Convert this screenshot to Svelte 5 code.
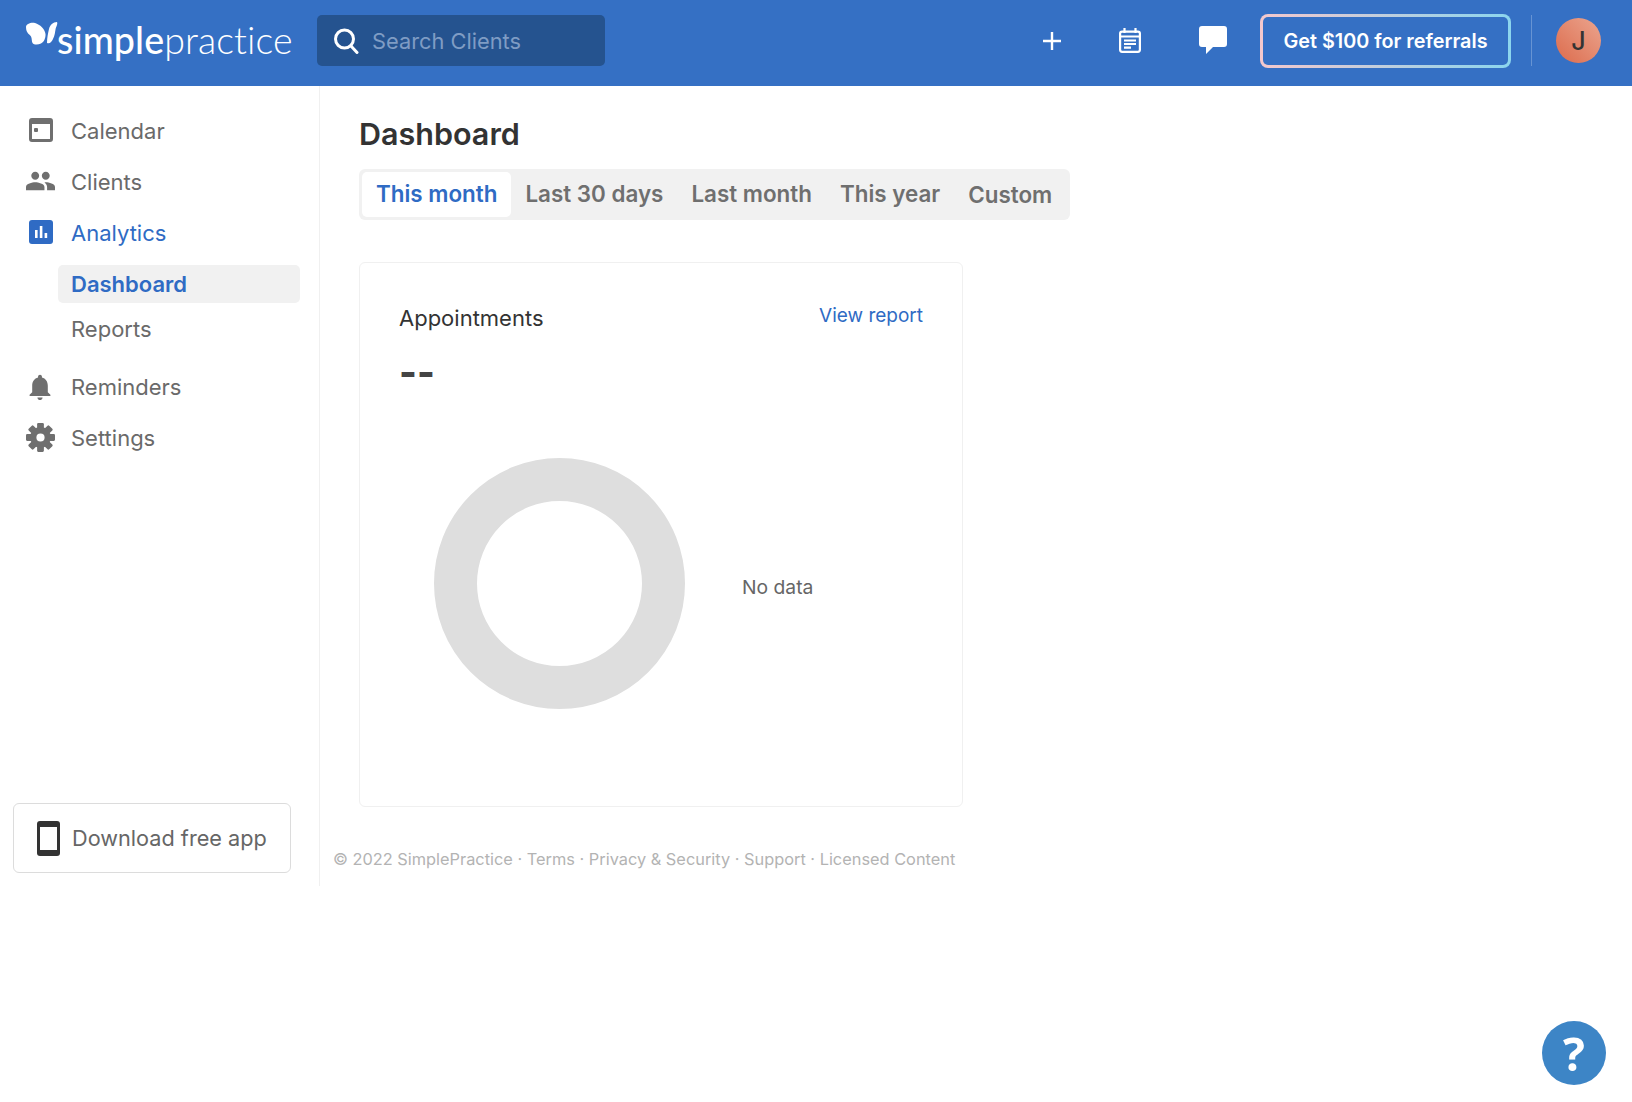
<script>
  const periods = ["This month", "Last 30 days", "Last month", "This year", "Custom"]
  const footerLinks = ["Terms", "Privacy & Security", "Support", "Licensed Content"]
  const teeth = [0, 45, 90, 135, 180, 225, 270, 315]
</script>

<header>
  <div class="logo">
    <svg class="fly" viewBox="0 0 34 26" width="34" height="26">
      <path d="M1 6C1 3 6 1 10 2c5 1.500 10 6 10.500 11 .3 4-1.500 8-4.500 9.500-3 1.500-7 1.500-8.500-.5-1-2-.5-4.500-1.500-6.500-1-2-5-3-5-9.500z" fill="#fff"/>
      <path d="M32 1c-4 0-7 3-8 7-1 4-2 9-2 14 3 1 4.500-1 6-4 2-4 2-7 2.600-10 .4-2 2.400-5 1.400-7z" fill="#fff"/>
    </svg>
    <span class="word"><b>simple</b>practice</span>
  </div>
  <div class="search">
    <svg viewBox="0 0 26 26" width="26" height="26" fill="none" stroke="#fff" stroke-width="3" stroke-linecap="round">
      <circle cx="11.5" cy="11" r="9"/>
      <path d="M18 18l6 6.5"/>
    </svg>
    <span>Search Clients</span>
  </div>
  <div class="actions">
    <svg class="plus" viewBox="0 0 18 18" width="18" height="18" stroke="#fff" stroke-width="2.4">
      <path d="M9 0v18M0 9h18"/>
    </svg>
    <svg class="cal" viewBox="0 0 22 25" width="22" height="25" fill="none" stroke="#fff" stroke-width="2.2">
      <rect x="1.1" y="3.6" width="19.8" height="20.2" rx="2"/>
      <path d="M5.5 0v5M16.5 0v5M1 8.5h20M5 12.5h12M5 16h12M5 19.7h7"/>
    </svg>
    <svg class="chat" viewBox="0 0 28 28" width="28" height="28">
      <path d="M3 0h22a3 3 0 0 1 3 3v15a3 3 0 0 1-3 3H14l-7 7v-7H3a3 3 0 0 1-3-3V3a3 3 0 0 1 3-3z" fill="#fff"/>
    </svg>
    <div class="refer">Get $100 for referrals</div>
    <div class="divider"></div>
    <div class="avatar">J</div>
  </div>
</header>

<div class="page">
  <aside>
    <nav>
      <a class="item" href="#calendar">
        <svg viewBox="0 0 24 24" width="24" height="24">
          <path fill-rule="evenodd" d="M3 0h18a3 3 0 0 1 3 3v18a3 3 0 0 1-3 3H3a3 3 0 0 1-3-3V3a3 3 0 0 1 3-3zM3 6v15h18V6z" fill="#6f6f6f"/>
          <rect x="5" y="10" width="4" height="4" rx="1" fill="#6f6f6f"/>
        </svg>
        Calendar
      </a>
      <a class="item" href="#clients">
        <svg class="wide" viewBox="1 5 22 14" width="29" height="20">
          <path d="M16 11c1.66 0 2.99-1.34 2.99-3S17.66 5 16 5c-1.66 0-3 1.34-3 3s1.34 3 3 3zm-8 0c1.66 0 2.99-1.34 2.99-3S9.66 5 8 5C6.34 5 5 6.34 5 8s1.34 3 3 3zm0 2c-2.33 0-7 1.17-7 3.5V19h14v-2.5c0-2.33-4.67-3.5-7-3.5zm8 0c-.29 0-.62.02-.97.05 1.16.84 1.97 1.97 1.97 3.45V19h6v-2.5c0-2.33-4.67-3.5-7-3.5z" fill="#6f6f6f"/>
        </svg>
        Clients
      </a>
      <a class="item blue" href="#analytics">
        <svg viewBox="0 0 24 24" width="24" height="24">
          <rect width="24" height="24" rx="3" fill="#2f6bc4"/>
          <path d="M6 10h2.6v8H6zM10.8 6h2.6v12h-2.6zM15.6 13h2.6v5h-2.6z" fill="#fff"/>
        </svg>
        Analytics
      </a>
      <div class="subs">
        <a class="sub active" href="#dashboard">Dashboard</a>
        <a class="sub" href="#reports">Reports</a>
      </div>
      <a class="item" href="#reminders">
        <svg viewBox="4 2 16 20" width="22" height="26">
          <path d="M12 22c1.1 0 2-.9 2-2h-4c0 1.1.9 2 2 2zm6-6v-5c0-3.07-1.64-5.64-4.5-6.32V4c0-.83-.67-1.5-1.5-1.5s-1.5.67-1.5 1.5v.68C7.63 5.36 6 7.92 6 11v5l-2 2v1h16v-1l-2-2z" fill="#6f6f6f"/>
        </svg>
        Reminders
      </a>
      <a class="item" href="#settings">
        <svg class="wide" viewBox="0 0 30 30" width="29" height="29">
          {#each teeth as t}
            <rect x="11.5" y="0" width="7" height="7" rx="1.2" fill="#6f6f6f" transform="rotate({t} 15 15)"/>
          {/each}
          <circle cx="15" cy="15" r="7.5" fill="none" stroke="#6f6f6f" stroke-width="6.5"/>
        </svg>
        Settings
      </a>
    </nav>
    <a class="download" href="#app">
      <svg viewBox="0 0 23 35" width="23" height="35">
        <rect width="23" height="35" rx="3" fill="#333"/>
        <rect x="3" y="6" width="17" height="23" fill="#fff"/>
      </svg>
      Download free app
    </a>
  </aside>

  <main>
    <h1>Dashboard</h1>
    <div class="tabs">
      {#each periods as p, i}
        <button class:on={i == 0}>{p}</button>
      {/each}
    </div>

    <section class="card">
      <div class="card-top">
        <span class="card-title">Appointments</span>
        <a class="report" href="#report">View report</a>
      </div>
      <div class="count">--</div>
      <div class="chart">
        <svg viewBox="0 0 251 251" width="251" height="251">
          <circle cx="125.5" cy="125.5" r="104" fill="none" stroke="#dedede" stroke-width="43"/>
        </svg>
        <span class="nodata">No data</span>
      </div>
    </section>

    <footer>© 2022 SimplePractice{#each footerLinks as l}<span class="dot">{" · "}</span>{l}{/each}</footer>
  </main>
</div>

<button class="help">?</button>

<style>
  :global(body) {
    margin: 0;
    background: #fff;
    font-family: Inter, "Liberation Sans", sans-serif;
    color: #333;
  }
  a {
    text-decoration: none;
    color: inherit;
  }
  header {
    height: 86px;
    box-sizing: border-box;
    padding-bottom: 5px;
    background: #3570c4;
    display: flex;
    align-items: center;
  }
  .logo {
    width: 317px;
    height: 81px;
    flex: none;
    box-sizing: border-box;
    padding: 21px 0 0 25px;
    display: flex;
    align-items: flex-start;
    color: #fff;
  }
  .fly {
    flex: none;
  }
  .word {
    font-family: Lato, sans-serif;
    font-size: 37.6px;
    font-weight: 300;
    line-height: 36px;
    margin: 1px 0 0 -2px;
    letter-spacing: 0.1px;
  }
  .word b {
    font-weight: 500;
  }
  .search {
    width: 288px;
    height: 51px;
    box-sizing: border-box;
    background: #25538f;
    border-radius: 5px;
    display: flex;
    align-items: center;
    gap: 13px;
    padding-left: 16px;
    color: #7f9cc4;
    font-size: 21.8px;
  }
  .actions {
    margin-left: auto;
    display: flex;
    align-items: center;
  }
  .plus {
    margin-right: 58px;
  }
  .cal {
    margin-right: 58px;
  }
  .chat {
    margin-right: 33px;
    margin-top: -1px;
  }
  .refer {
    width: 251px;
    height: 54px;
    box-sizing: border-box;
    border: 3.5px solid transparent;
    border-radius: 8px;
    background: linear-gradient(#3570c4, #3570c4) padding-box, linear-gradient(90deg, #f4c8cd, #8bd5ee) border-box;
    color: #fff;
    font-size: 19.8px;
    font-weight: 600;
    display: flex;
    align-items: center;
    justify-content: center;
  }
  .divider {
    width: 1px;
    height: 51px;
    background: rgba(255, 255, 255, 0.25);
    margin: 0 24px 0 20px;
  }
  .avatar {
    width: 45px;
    height: 45px;
    border-radius: 50%;
    margin-right: 31px;
    background: linear-gradient(45deg, #dc6b4c, #eba58f);
    color: #333;
    font-size: 25px;
    font-weight: 500;
    display: flex;
    align-items: center;
    justify-content: center;
  }
  .page {
    display: flex;
    align-items: flex-start;
  }
  aside {
    width: 320px;
    height: 800px;
    flex: none;
    box-sizing: border-box;
    border-right: 1px solid #f0f0f0;
    padding: 19px 0 13px;
    display: flex;
    flex-direction: column;
    justify-content: space-between;
  }
  .item {
    height: 51px;
    display: flex;
    align-items: center;
    position: relative;
    padding-left: 71px;
    font-size: 22px;
    color: #6a6a6a;
  }
  .item svg {
    position: absolute;
    left: 29px;
    top: 13px;
  }
  .item svg.wide {
    left: 26px;
    top: 15px;
  }
  .item:last-child svg.wide {
    top: 11px;
  }
  .item.blue {
    color: #2f6bc4;
  }
  .subs {
    display: flex;
    flex-direction: column;
    margin: 7px 19px 6px 58px;
  }
  .sub {
    height: 38px;
    line-height: 38px;
    padding-left: 13px;
    font-size: 22px;
    color: #6a6a6a;
    border-radius: 5px;
    margin-bottom: 7px;
  }
  .sub.active {
    background: #f1f1f1;
    color: #2f6bc4;
    font-weight: 600;
  }
  .download {
    width: 278px;
    height: 70px;
    margin-left: 13px;
    box-sizing: border-box;
    border: 1px solid #dcdcdc;
    border-radius: 6px;
    padding-left: 23px;
    display: flex;
    align-items: center;
    gap: 12px;
    font-size: 21.7px;
    color: #666;
  }
  main {
    padding: 0 0 0 39px;
  }
  h1 {
    margin: 29px 0 0;
    font-size: 30.5px;
    line-height: 38px;
    font-weight: 600;
    color: #333;
  }
  .tabs {
    margin-top: 16px;
    width: 711px;
    height: 51px;
    box-sizing: border-box;
    background: #f1f1f1;
    border-radius: 6px;
    padding: 3px;
    display: flex;
  }
  .tabs button {
    border: none;
    background: none;
    padding: 0 14px;
    font: 600 22.4px Inter, sans-serif;
    color: #6f6f6f;
    border-radius: 5px;
    white-space: nowrap;
  }
  .tabs button:not(:last-child) {
    padding-bottom: 2px;
  }
  .tabs button.on {
    background: #fff;
    color: #2f6bc4;
  }
  .card {
    margin-top: 42px;
    width: 604px;
    height: 545px;
    box-sizing: border-box;
    border: 1px solid #f0f0f0;
    border-radius: 6px;
    padding: 0 39px;
  }
  .card-top {
    display: flex;
    justify-content: space-between;
    align-items: flex-start;
    padding-top: 41px;
  }
  .card-title {
    font-size: 22px;
    line-height: 28px;
  }
  .report {
    font-size: 19px;
    line-height: 24px;
    color: #2f6bc4;
  }
  .count {
    font-size: 38px;
    font-weight: 800;
    line-height: 40px;
    letter-spacing: 0;
    color: #444;
    margin-top: 20px;
  }
  .chart {
    display: flex;
    align-items: center;
    margin: 66px 0 0 35px;
  }
  .chart svg {
    flex: none;
  }
  .nodata {
    font-size: 19.3px;
    color: #666;
    margin: 6px 0 0 57px;
  }
  footer {
    margin: 41px 0 0 -26px;
    font-size: 16.35px;
    line-height: 22px;
    color: #b3b3b3;
    white-space: nowrap;
  }
  .help {
    position: fixed;
    left: 1542px;
    top: 1021px;
    width: 64px;
    height: 64px;
    border: none;
    border-radius: 50%;
    background: #3d85c6;
    color: #fff;
    font: 700 46px "Open Sans", sans-serif;
    display: flex;
    align-items: center;
    justify-content: center;
    padding: 0;
  }
</style>
